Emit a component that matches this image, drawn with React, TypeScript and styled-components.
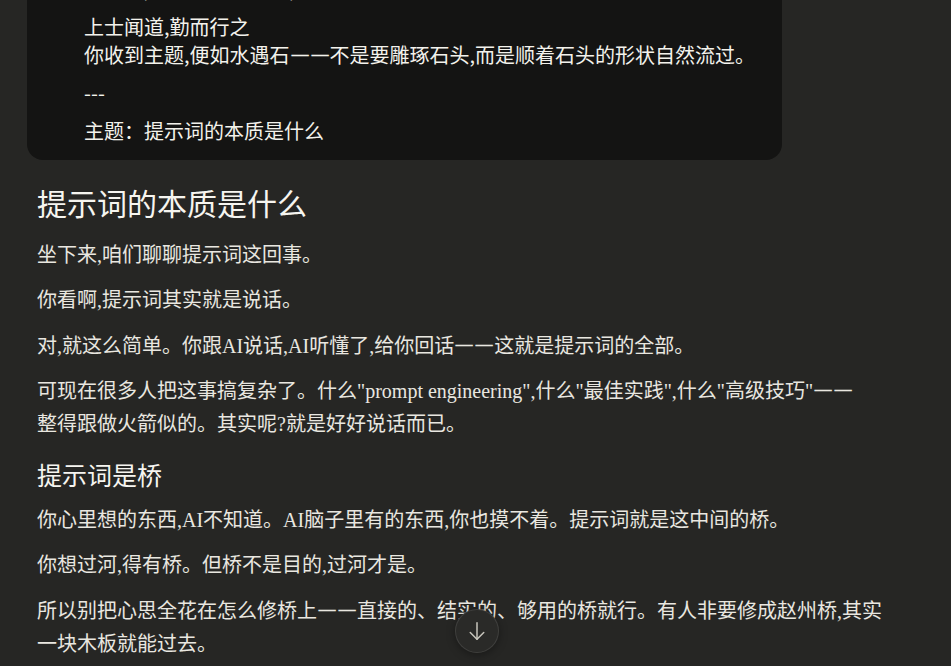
import React, { useLayoutEffect, useRef } from "react";
import styled, { createGlobalStyle } from "styled-components";

const GlobalStyle = createGlobalStyle`
  html, body {
    margin: 0;
    padding: 0;
    background: #262624;
    overflow: hidden;
  }
  * { box-sizing: border-box; }
`;

const Main = styled.main`
  position: relative;
  height: 100vh;
  overflow-y: auto;
  scrollbar-width: none;
  &::-webkit-scrollbar { display: none; }
`;

const Thread = styled.div`
  display: flex;
  flex-direction: column;
  padding: 16px 27px 180px;
`;

const UserBubble = styled.div`
  width: 755px;
  background: #141413;
  border-radius: 16px;
  padding: 16px 8px 15px 57px;
  font-family: "Noto Sans CJK SC", "Noto Sans", sans-serif;
  font-size: 20px;
  line-height: 28px;
  color: #f3f2ec;
`;

const BubbleLine = styled.p`
  margin: 0 0 10px;
  &:last-child { margin-bottom: 0; }
`;

const Response = styled.article`
  margin-top: 25px;
  padding-left: 10px;
  max-width: 866px;
  font-family: "Liberation Serif", "Noto Sans CJK SC", serif;
  color: #e9e7e0;
`;

const Title = styled.h1`
  margin: 0 0 13.5px;
  font-size: 30px;
  line-height: 40px;
  font-weight: 400;
  color: #f6f5f0;
`;

const Subtitle = styled.h2`
  margin: 18.5px 0 10px;
  font-size: 25px;
  line-height: 34px;
  font-weight: 400;
  color: #f6f5f0;
`;

const Para = styled.p`
  margin: 0 0 12.5px;
  font-size: 20px;
  line-height: 33px;
`;

/* one stroke of a CJK-style double dash: full-width cell, slightly narrower stroke */
const DashStroke = styled.span`
  display: inline-block;
  width: 20px;
  font-family: "Liberation Serif", serif;
  font-size: 20px;
  line-height: 1;
  font-weight: 700;
  text-align: center;
  transform: translateY(-2px) scaleX(0.86);
`;

const ScrollDown = styled.button`
  position: fixed;
  bottom: 13px;
  left: calc(50% - 21px);
  width: 44px;
  height: 44px;
  border-radius: 50%;
  border: 1px solid rgba(255, 255, 255, 0.1);
  background: #2a2a28;
  box-shadow: 0 2px 8px rgba(0, 0, 0, 0.35);
  display: flex;
  align-items: center;
  justify-content: center;
  padding: 0;
  cursor: pointer;
  color: #c8c6bd;
`;

const ArrowDown = () => (
  <svg width="24" height="24" viewBox="0 0 256 256" fill="none" stroke="currentColor" strokeWidth="16" strokeLinecap="round" strokeLinejoin="round">
    <path d="M128 40v176" />
    <path d="M56 144l72 72 72-72" />
  </svg>
);

const DD = () => (
  <>
    <DashStroke>—</DashStroke>
    <DashStroke>—</DashStroke>
  </>
);

export default function App() {
  const mainRef = useRef<HTMLElement>(null);
  useLayoutEffect(() => {
    if (mainRef.current) mainRef.current.scrollTop = 57;
  }, []);

  return (
    <>
      <GlobalStyle />
      <Main ref={mainRef}>
        <Thread>
          <UserBubble>
            <BubbleLine>道可道,非常道。名可名,非常名</BubbleLine>
            <BubbleLine>
              上士闻道,勤而行之
              <br />
              你收到主题,便如水遇石<DD />不是要雕琢石头,而是顺着石头的形状自然流过。
            </BubbleLine>
            <BubbleLine>---</BubbleLine>
            <BubbleLine>主题：提示词的本质是什么</BubbleLine>
          </UserBubble>
          <Response>
            <Title>提示词的本质是什么</Title>
            <Para>坐下来,咱们聊聊提示词这回事。</Para>
            <Para>你看啊,提示词其实就是说话。</Para>
            <Para>对,就这么简单。你跟AI说话,AI听懂了,给你回话<DD />这就是提示词的全部。</Para>
            <Para>
              可现在很多人把这事搞复杂了。什么"prompt engineering",什么"最佳实践",什么"高级技巧"<DD />
              <br />
              整得跟做火箭似的。其实呢?就是好好说话而已。
            </Para>
            <Subtitle>提示词是桥</Subtitle>
            <Para>你心里想的东西,AI不知道。AI脑子里有的东西,你也摸不着。提示词就是这中间的桥。</Para>
            <Para>你想过河,得有桥。但桥不是目的,过河才是。</Para>
            <Para>所以别把心思全花在怎么修桥上<DD />直接的、结实的、够用的桥就行。有人非要修成赵州桥,其实一块木板就能过去。</Para>
            <Subtitle>说话的本事</Subtitle>
            <Para>把话说清楚,把意思说明白,这就够了。</Para>
          </Response>
        </Thread>
        <ScrollDown aria-label="Scroll to bottom">
          <ArrowDown />
        </ScrollDown>
      </Main>
    </>
  );
}
